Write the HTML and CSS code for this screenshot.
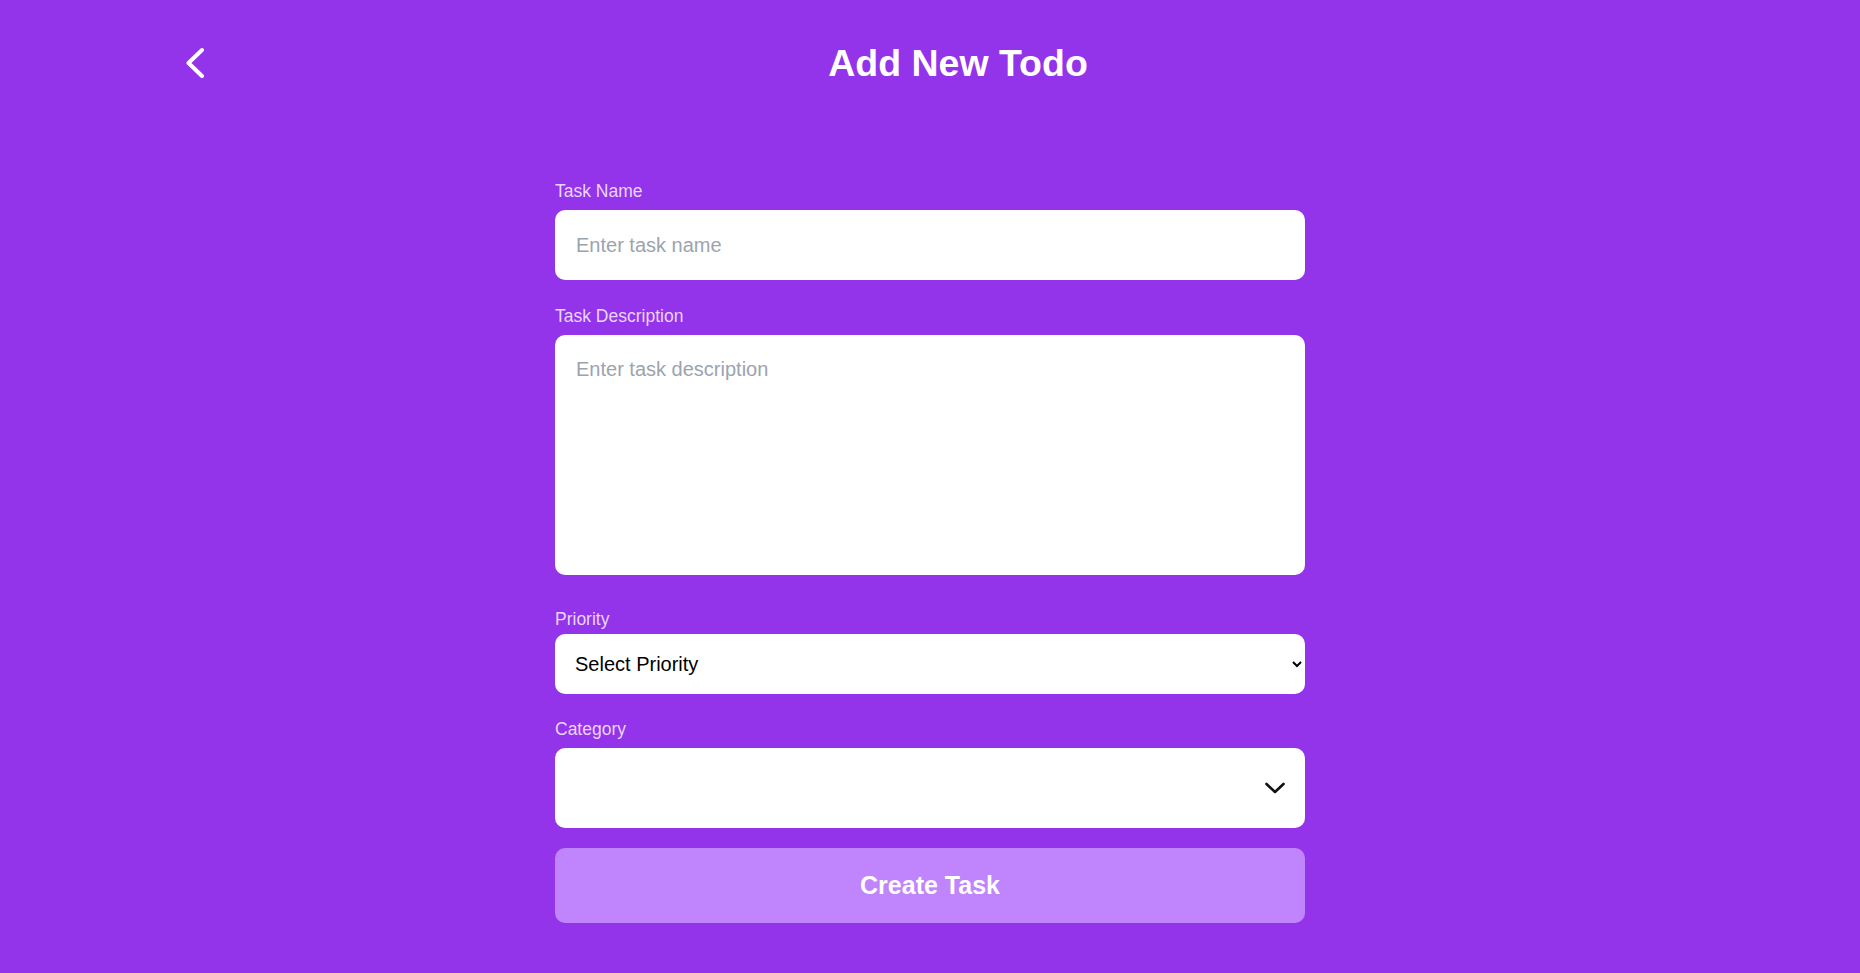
FILE: index.html
```html
<!DOCTYPE html>
<html lang="en">
<head>
<meta charset="utf-8">
<title>Add New Todo</title>
<link rel="stylesheet" href="styles.css">
</head>
<body>
<div class="page">
  <header class="header">
    <button class="back" type="button" aria-label="Back">
      <svg width="20" height="32" viewBox="0 0 20 32"><polyline points="16,3 2.5,16 16,29" fill="none" stroke="#fff" stroke-width="4" stroke-linecap="round" stroke-linejoin="round"/></svg>
    </button>
    <h1 class="title">Add New Todo</h1>
  </header>
  <form class="form">
    <div class="group group-name">
      <label class="label">Task Name</label>
      <input class="field input" type="text" placeholder="Enter task name">
    </div>
    <div class="group group-desc">
      <label class="label">Task Description</label>
      <textarea class="field textarea" placeholder="Enter task description"></textarea>
    </div>
    <div class="group group-priority">
      <label class="label label-tight">Priority</label>
      <select class="field select">
        <option>Select Priority</option>
        <option>High</option>
        <option>Medium</option>
        <option>Low</option>
      </select>
    </div>
    <div class="group group-category">
      <label class="label">Category</label>
      <div class="field category">
        <span class="category-value"></span>
        <svg class="caret" width="22" height="14" viewBox="0 0 22 14"><polyline points="2.5,3 11,11 19.5,3" fill="none" stroke="#111" stroke-width="2.6" stroke-linecap="round" stroke-linejoin="round"/></svg>
      </div>
    </div>
    <button class="submit" type="button">Create Task</button>
  </form>
</div>
</body>
</html>
```
FILE: styles.css
```css
* { box-sizing: border-box; }
html, body {
  margin: 0;
  padding: 0;
  height: 100%;
}
body {
  background: #9333ea;
  font-family: "Liberation Sans", Arial, sans-serif;
  color: #fff;
}
.page {
  min-height: 100%;
}
.header {
  display: flex;
  align-items: center;
  padding: 42px 176px 0 176px;
  gap: 16px;
}
.back {
  width: 40px;
  height: 42px;
  padding: 0;
  border: none;
  background: transparent;
  display: flex;
  align-items: center;
  justify-content: center;
  cursor: pointer;
}
.title {
  flex: 1;
  margin: 0;
  text-align: center;
  font-size: 37.5px;
  font-weight: 700;
  line-height: 42px;
}
.form {
  width: 750px;
  margin: 97px auto 0;
  display: flex;
  flex-direction: column;
}
.group {
  display: flex;
  flex-direction: column;
}
.group-name { margin-bottom: 26px; }
.group-desc { margin-bottom: 34px; }
.group-priority { margin-bottom: 25px; }
.group-category { margin-bottom: 20px; }
.label {
  font-size: 17.5px;
  line-height: 20px;
  color: #e9d5ff;
  margin-bottom: 9px;
}
.label-tight { margin-bottom: 5px; }
.field {
  width: 100%;
  border: none;
  border-radius: 10px;
  background: #fff;
  font-family: "Liberation Sans", Arial, sans-serif;
  font-size: 20px;
  color: #111;
  outline: none;
}
.input {
  height: 70px;
  padding: 0 21px;
}
.textarea {
  display: block;
  height: 240px;
  padding: 23px 21px;
  resize: none;
  line-height: 23px;
}
.field::placeholder { color: #9ca3af; }
.select {
  height: 60px;
  padding: 0 4px 0 16px;
  color: #000;
}
.category {
  height: 80px;
  display: flex;
  align-items: center;
  justify-content: space-between;
  padding: 0 19px 0 21px;
}
.caret { display: block; }
.submit {
  height: 75px;
  width: 100%;
  border: none;
  border-radius: 10px;
  background: #c084fc;
  color: #fff;
  font-family: "Liberation Sans", Arial, sans-serif;
  font-size: 25px;
  font-weight: 700;
  cursor: pointer;
}
```
